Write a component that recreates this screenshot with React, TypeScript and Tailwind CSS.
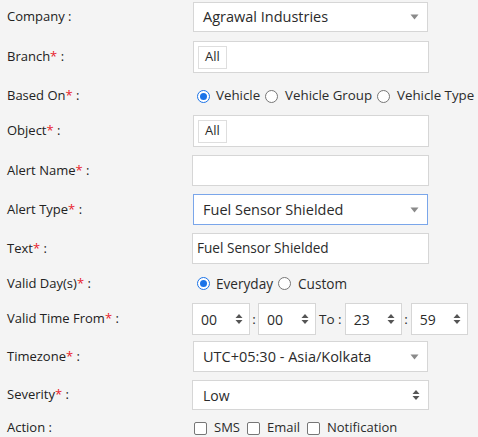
import type { ReactNode } from 'react';

const Req = () => <span className="text-[#e8212b]">*</span>;

const Label = ({ text, req = false }: { text: string; req?: boolean }) => (
  <div className="w-[193px] shrink-0 pl-[7px] text-[13px] text-[#222]">
    {text}
    {req && <Req />}
    {' '}:
  </div>
);

const Caret = () => (
  <svg width="9" height="6" viewBox="0 0 9 6" className="absolute right-[8px] top-1/2 -translate-y-1/2">
    <path d="M0.5 0.5 H8.5 L4.5 5.5 Z" fill="#8a8a8a" />
  </svg>
);

const Spinner = ({ className = '' }: { className?: string }) => (
  <svg width="8" height="12" viewBox="0 0 8 12" className={`absolute top-1/2 -translate-y-1/2 ${className}`}>
    <path d="M0.5 5 L4 1 L7.5 5 Z" fill="#555" />
    <path d="M0.5 7 L4 11 L7.5 7 Z" fill="#555" />
  </svg>
);

const Box = ({
  children,
  className = '',
  blue = false,
}: {
  children?: ReactNode;
  className?: string;
  blue?: boolean;
}) => (
  <div
    className={`relative flex shrink-0 items-center bg-white border ${
      blue ? 'border-[#7aa6ea]' : 'border-[#d6d6d6]'
    } text-[#2b2b2b] ${className}`}
  >
    {children}
  </div>
);

const Tag = ({ text }: { text: string }) => (
  <div className="ml-[4px] flex h-[23px] items-center border border-[#dedede] px-[6px] text-[13px] text-[#2b2b2b]">
    {text}
  </div>
);

const Radio = ({ checked = false }: { checked?: boolean }) =>
  checked ? (
    <span className="flex h-[13px] w-[13px] shrink-0 items-center justify-center rounded-full border border-[#1a73e8] bg-white">
      <span className="h-[7px] w-[7px] rounded-full bg-[#1a73e8]" />
    </span>
  ) : (
    <span className="block h-[13px] w-[13px] shrink-0 rounded-full border border-[#767676] bg-white" />
  );

const Check = () => (
  <span className="block h-[13px] w-[13px] shrink-0 rounded-[2px] border border-[#767676] bg-white" />
);

const Row = ({ children, className = '' }: { children: ReactNode; className?: string }) => (
  <div className={`flex items-center ${className}`}>{children}</div>
);

export default function App() {
  return (
    <div
      className="h-[437px] w-[478px] overflow-hidden bg-[#f4f4f4] pt-[2px]"
      style={{ fontFamily: '"Open Sans", "Noto Sans", sans-serif' }}
    >
      <Row className="h-[30px]">
        <Label text="Company" />
        <Box className="h-[30px] w-[235px] pl-[9px] text-[14.5px]">
          Agrawal Industries
          <Caret />
        </Box>
      </Row>

      <Row className="mt-[9px] h-[32px]">
        <Label text="Branch" req />
        <Box className="h-[32px] w-[236px]">
          <Tag text="All" />
        </Box>
      </Row>

      <Row className="mt-[12px] h-[22px]">
        <Label text="Based On" req />
        <div className="flex shrink-0 items-center whitespace-nowrap pl-[4px] text-[13.3px] text-[#2b2b2b]">
          <Radio checked />
          <span className="ml-[6px]">Vehicle</span>
          <span className="ml-[5px] flex">
            <Radio />
          </span>
          <span className="ml-[7px]">Vehicle Group</span>
          <span className="ml-[5px] flex">
            <Radio />
          </span>
          <span className="ml-[7px]">Vehicle Type</span>
        </div>
      </Row>

      <Row className="mt-[8px] h-[32px]">
        <Label text="Object" req />
        <Box className="h-[32px] w-[236px]">
          <Tag text="All" />
        </Box>
      </Row>

      <Row className="mt-[8px] h-[31px]">
        <Label text="Alert Name" req />
        <Box className="-ml-[1px] h-[31px] w-[237px]" />
      </Row>

      <Row className="mt-[8px] h-[31px]">
        <Label text="Alert Type" req />
        <Box blue className="h-[31px] w-[235px] pl-[9px] text-[14.5px]">
          Fuel Sensor Shielded
          <Caret />
        </Box>
      </Row>

      <Row className="mt-[8px] h-[31px]">
        <Label text="Text" req />
        <Box className="-ml-[1px] h-[31px] w-[237px] pl-[4px] text-[13.6px]">Fuel Sensor Shielded</Box>
      </Row>

      <Row className="mt-[9px] h-[22px]">
        <Label text="Valid Day(s)" req />
        <div className="flex shrink-0 items-center whitespace-nowrap pl-[4px] text-[13.6px] text-[#2b2b2b]">
          <Radio checked />
          <span className="ml-[6px]">Everyday</span>
          <span className="ml-[5px] flex">
            <Radio />
          </span>
          <span className="ml-[7px]">Custom</span>
        </div>
      </Row>

      <Row className="mt-[8px] h-[32px]">
        <Label text="Valid Time From" req />
        <div className="-ml-[1px] flex items-center whitespace-nowrap text-[13.5px] text-[#2b2b2b]">
          <Box className="h-[32px] w-[58px] pl-[8px] text-[14px]">
            00
            <Spinner className="right-[6px]" />
          </Box>
          <span className="w-[8px] text-center">:</span>
          <Box className="h-[32px] w-[58px] pl-[8px] text-[14px]">
            00
            <Spinner className="right-[6px]" />
          </Box>
          <span className="ml-[3px] mr-[3px]">To :</span>
          <Box className="h-[32px] w-[57px] pl-[8px] text-[14px]">
            23
            <Spinner className="right-[6px]" />
          </Box>
          <span className="w-[9px] text-center">:</span>
          <Box className="h-[32px] w-[57px] pl-[8px] text-[14px]">
            59
            <Spinner className="right-[6px]" />
          </Box>
        </div>
      </Row>

      <Row className="mt-[6px] h-[31px]">
        <Label text="Timezone" req />
        <Box className="h-[31px] w-[235px] pl-[9px] text-[14.5px]">
          UTC+05:30 - Asia/Kolkata
          <Caret />
        </Box>
      </Row>

      <Row className="mt-[8px] h-[30px]">
        <Label text="Severity" req />
        <Box className="-ml-[1px] h-[30px] w-[237px] pl-[10px] text-[14px]">
          Low
          <Spinner className="right-[8px]" />
        </Box>
      </Row>

      <Row className="mt-[8px] h-[20px]">
        <Label text="Action" />
        <div className="flex items-center whitespace-nowrap pl-[1px] text-[13px] text-[#2b2b2b]">
          <Check />
          <span className="ml-[7px]">SMS</span>
          <span className="ml-[7px] flex">
            <Check />
          </span>
          <span className="ml-[7px]">Email</span>
          <span className="ml-[7px] flex">
            <Check />
          </span>
          <span className="ml-[7px]">Notification</span>
        </div>
      </Row>
    </div>
  );
}
